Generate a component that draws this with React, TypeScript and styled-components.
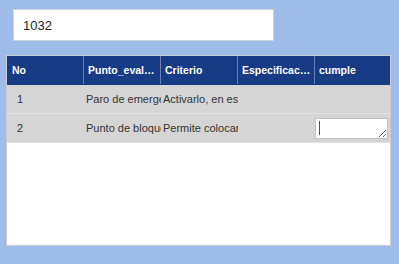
import React from "react";
import styled, { createGlobalStyle } from "styled-components";

const GlobalStyle = createGlobalStyle`
	html, body {
		margin: 0;
		padding: 0;
		background: #9ebbe9;
		font-family: "Liberation Sans", Arial, sans-serif;
	}
`;

const columns = ["No", "Punto_evaluacion", "Criterio", "Especificacion", "cumple"];

const rows = [
	{ no: "1", punto: "Paro de emergencia", criterio: "Activarlo, en estado", spec: "", editing: false },
	{ no: "2", punto: "Punto de bloqueo", criterio: "Permite colocar candado", spec: "", editing: true },
];

const App = () => {
	return (
		<Page>
			<GlobalStyle />
			<SearchInput defaultValue="1032" />
			<Grid>
				<HeaderRow>
					{columns.map((c) => (
						<HeaderCell key={c}>{c}</HeaderCell>
					))}
				</HeaderRow>
				{rows.map((r) => (
					<Row key={r.no}>
						<Cell $pad={10}>{r.no}</Cell>
						<Cell $pad={2}>{r.punto}</Cell>
						<Cell $pad={2}>{r.criterio}</Cell>
						<Cell $pad={2}>{r.spec}</Cell>
						<Cell $pad={0}>
							{r.editing && (
								<EditorWrap>
									<Editor />
								</EditorWrap>
							)}
						</Cell>
					</Row>
				))}
			</Grid>
		</Page>
	);
};

const Page = styled.div`
	width: 399px;
	height: 264px;
	padding-top: 9px;
	box-sizing: border-box;
	display: flex;
	flex-direction: column;
	align-items: flex-start;
`;

const SearchInput = styled.input`
	margin-left: 13px;
	width: 261px;
	height: 32px;
	box-sizing: border-box;
	border: 1px solid #cfd3d8;
	background: #fff;
	padding: 0 9px;
	font-family: "Liberation Sans", Arial, sans-serif;
	font-size: 13px;
	color: #222;
	outline: none;
`;

const Grid = styled.div`
	margin: 14px 0 0 6px;
	width: 385px;
	height: 191px;
	box-sizing: border-box;
	border: 1px solid #c9ccd1;
	background: #fff;
	overflow: hidden;
`;

const HeaderRow = styled.div`
	display: grid;
	grid-template-columns: 77px 77px 77px 77px 75px;
	height: 29px;
	background: #173b85;
	border-bottom: 1px solid #173b85;
	box-sizing: border-box;
`;

const HeaderCell = styled.div`
	padding: 0 3px 0 4px;
	border-right: 1px solid #6a80b5;
	color: #fff;
	font-size: 10.5px;
	font-weight: 700;
	line-height: 28px;
	white-space: nowrap;
	overflow: hidden;
	text-overflow: ellipsis;

	&:first-child {
		padding-left: 5px;
	}

	&:last-child {
		border-right: none;
	}
`;

const Row = styled.div`
	display: grid;
	grid-template-columns: 77px 77px 77px 77px 75px;
	height: 29px;
	background: #d5d5d5;
	border-bottom: 1px solid #e2e2e2;
	box-sizing: border-box;
`;

const Cell = styled.div<{ $pad: number }>`
	display: flex;
	align-items: center;
	padding-left: ${(p) => p.$pad}px;
	color: #333;
	font-size: 11px;
	white-space: nowrap;
	overflow: hidden;
`;

const EditorWrap = styled.div`
	position: relative;
	display: flex;

	&::after {
		content: "";
		position: absolute;
		left: 4px;
		top: 3px;
		width: 1px;
		height: 14px;
		background: #555;
		pointer-events: none;
	}
`;

const Editor = styled.textarea`
	width: 73px;
	height: 21px;
	box-sizing: border-box;
	border: 1px solid #c0c0c0;
	background: #fff;
	padding: 1px 2px;
	font-family: "Liberation Sans", Arial, sans-serif;
	font-size: 11px;
	outline: none;
	resize: both;
`;

export default App;
